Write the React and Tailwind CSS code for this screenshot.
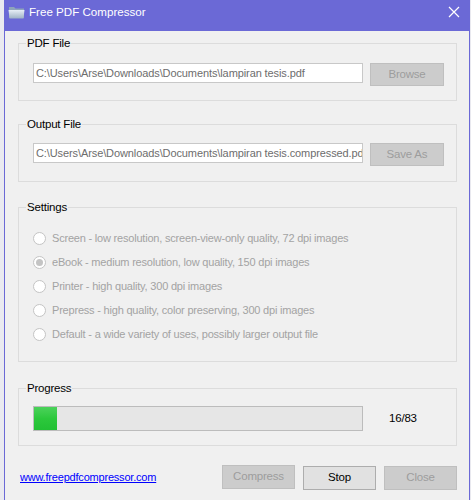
import React from "react";

function Group({ label, className, children }) {
  return (
    <div className={"relative border border-[#dcdcdc] " + className}>
      <span className="absolute -top-[8px] left-[7px] bg-[#f0f0f0] px-px text-[11.5px] leading-[14px] tracking-[-0.2px] text-black">
        {label}
      </span>
      {children}
    </div>
  );
}

function Radio({ checked, children }) {
  return (
    <div className="flex h-[24px] items-center">
      <span className="flex h-[13px] w-[13px] items-center justify-center rounded-full border border-[#c4c4c4] bg-white">
        {checked && <span className="h-[7px] w-[7px] rounded-full bg-[#c4c4c4]" />}
      </span>
      <span className="ml-[6px] text-[11px] tracking-[-0.2px] text-[#a3a3a3]">{children}</span>
    </div>
  );
}

function Btn({ children, active, className = "" }) {
  return (
    <div
      className={
        "flex h-[23px] w-[73px] items-center justify-center border text-[11.5px] tracking-[-0.2px] " +
        (active
          ? "border-[#adadad] bg-[#e1e1e1] text-black "
          : "border-[#bfbfbf] bg-[#cccccc] text-[#9d9d9d] ") +
        className
      }
    >
      {children}
    </div>
  );
}

export default function App() {
  return (
    <div
      className="flex h-[500px] w-[471px] overflow-hidden bg-[#e9e9ef]"
      style={{ fontFamily: '"Liberation Sans", Arial, sans-serif' }}
    >
      <div className="w-[4px] shrink-0 bg-[#eaeaf0]" />
      <div className="flex w-[466px] shrink-0 flex-col border-x border-[#6b69d6] bg-[#f0f0f0]">
        {/* Title bar */}
        <div className="-mx-px flex h-[31px] shrink-0 items-center bg-[#6b69d6] pl-[4px] pr-[10px]">
          <svg width="17" height="14" viewBox="0 0 17 14" className="-mt-[8px]">
            <defs>
              <linearGradient id="fg" x1="0" y1="0" x2="0" y2="1">
                <stop offset="0" stopColor="#e6eef6" />
                <stop offset="1" stopColor="#9fb3c6" />
              </linearGradient>
            </defs>
            <path d="M1 2 h5 l1.5 1.5 H16 V13 H1 Z" fill="#8ea4ba" />
            <path d="M0.5 5 H16.5 L15.5 13.5 H1.5 Z" fill="url(#fg)" />
          </svg>
          <span className="-mt-[7px] ml-[4px] text-[11.6px] text-white">Free PDF Compressor</span>
          <svg width="12" height="12" viewBox="0 0 12 12" className="-mt-[7px] ml-auto">
            <path d="M1 1 L11 11 M11 1 L1 11" stroke="white" strokeWidth="1.2" />
          </svg>
        </div>

        {/* PDF File */}
        <Group label="PDF File" className="ml-[13px] mt-[12px] h-[58px] w-[439px]">
          <div className="ml-[14px] mt-[19px] flex">
            <div className="flex h-[20px] w-[330px] items-center overflow-hidden whitespace-nowrap border border-[#c8c8c8] bg-white pl-[2px] text-[11px] tracking-[-0.1px] text-[#6d6d6d]">
              C:\Users\Arse\Downloads\Documents\lampiran tesis.pdf
            </div>
            <Btn className="ml-[7px] w-[74px]">Browse</Btn>
          </div>
        </Group>

        {/* Output File */}
        <Group label="Output File" className="ml-[13px] mt-[23px] h-[58px] w-[439px]">
          <div className="ml-[14px] mt-[18px] flex">
            <div className="flex h-[20px] w-[330px] items-center overflow-hidden whitespace-nowrap border border-[#c8c8c8] bg-white pl-[2px] text-[11px] tracking-[-0.1px] text-[#6d6d6d]">
              <span className="shrink-0">C:\Users\Arse\Downloads\Documents\lampiran tesis.compressed.pdf</span>
            </div>
            <Btn className="ml-[7px] w-[74px]">Save As</Btn>
          </div>
        </Group>

        {/* Settings */}
        <Group label="Settings" className="ml-[13px] mt-[25px] h-[155px] w-[439px]">
          <div className="ml-[14px] mt-[18px] flex flex-col">
            <Radio>Screen - low resolution, screen-view-only quality, 72 dpi images</Radio>
            <Radio checked>eBook - medium resolution, low quality, 150 dpi images</Radio>
            <Radio>Printer - high quality, 300 dpi images</Radio>
            <Radio>Prepress - high quality, color preserving, 300 dpi images</Radio>
            <Radio>Default - a wide variety of uses, possibly larger output file</Radio>
          </div>
        </Group>

        {/* Progress */}
        <Group label="Progress" className="ml-[13px] mt-[26px] h-[58px] w-[439px]">
          <div className="ml-[14px] mt-[17px] flex items-center">
            <div className="h-[25px] w-[330px] border border-[#bcbcbc] bg-[#e6e6e6]">
              <div
                className="h-full bg-gradient-to-b from-[#4ad25a] via-[#2cc83c] to-[#22c034]"
                style={{ width: "23px" }}
              />
            </div>
            <span className="ml-[26px] text-[11.5px] tracking-[-0.2px] text-black">16/83</span>
          </div>
        </Group>

        {/* Bottom row */}
        <div className="mr-[12px] mt-[19px] flex items-center">
          <a className="ml-[15px] text-[11px] tracking-[-0.2px] text-[#0000ff] underline">www.freepdfcompressor.com</a>
          <div className="ml-auto flex items-start gap-[8px]">
            <Btn className="h-[24px]">Compress</Btn>
            <Btn active className="mt-px h-[24px]">Stop</Btn>
            <Btn className="mt-px h-[24px]">Close</Btn>
          </div>
        </div>
      </div>
      <div className="w-px shrink-0 bg-[#e9e9ef]" />
    </div>
  );
}
